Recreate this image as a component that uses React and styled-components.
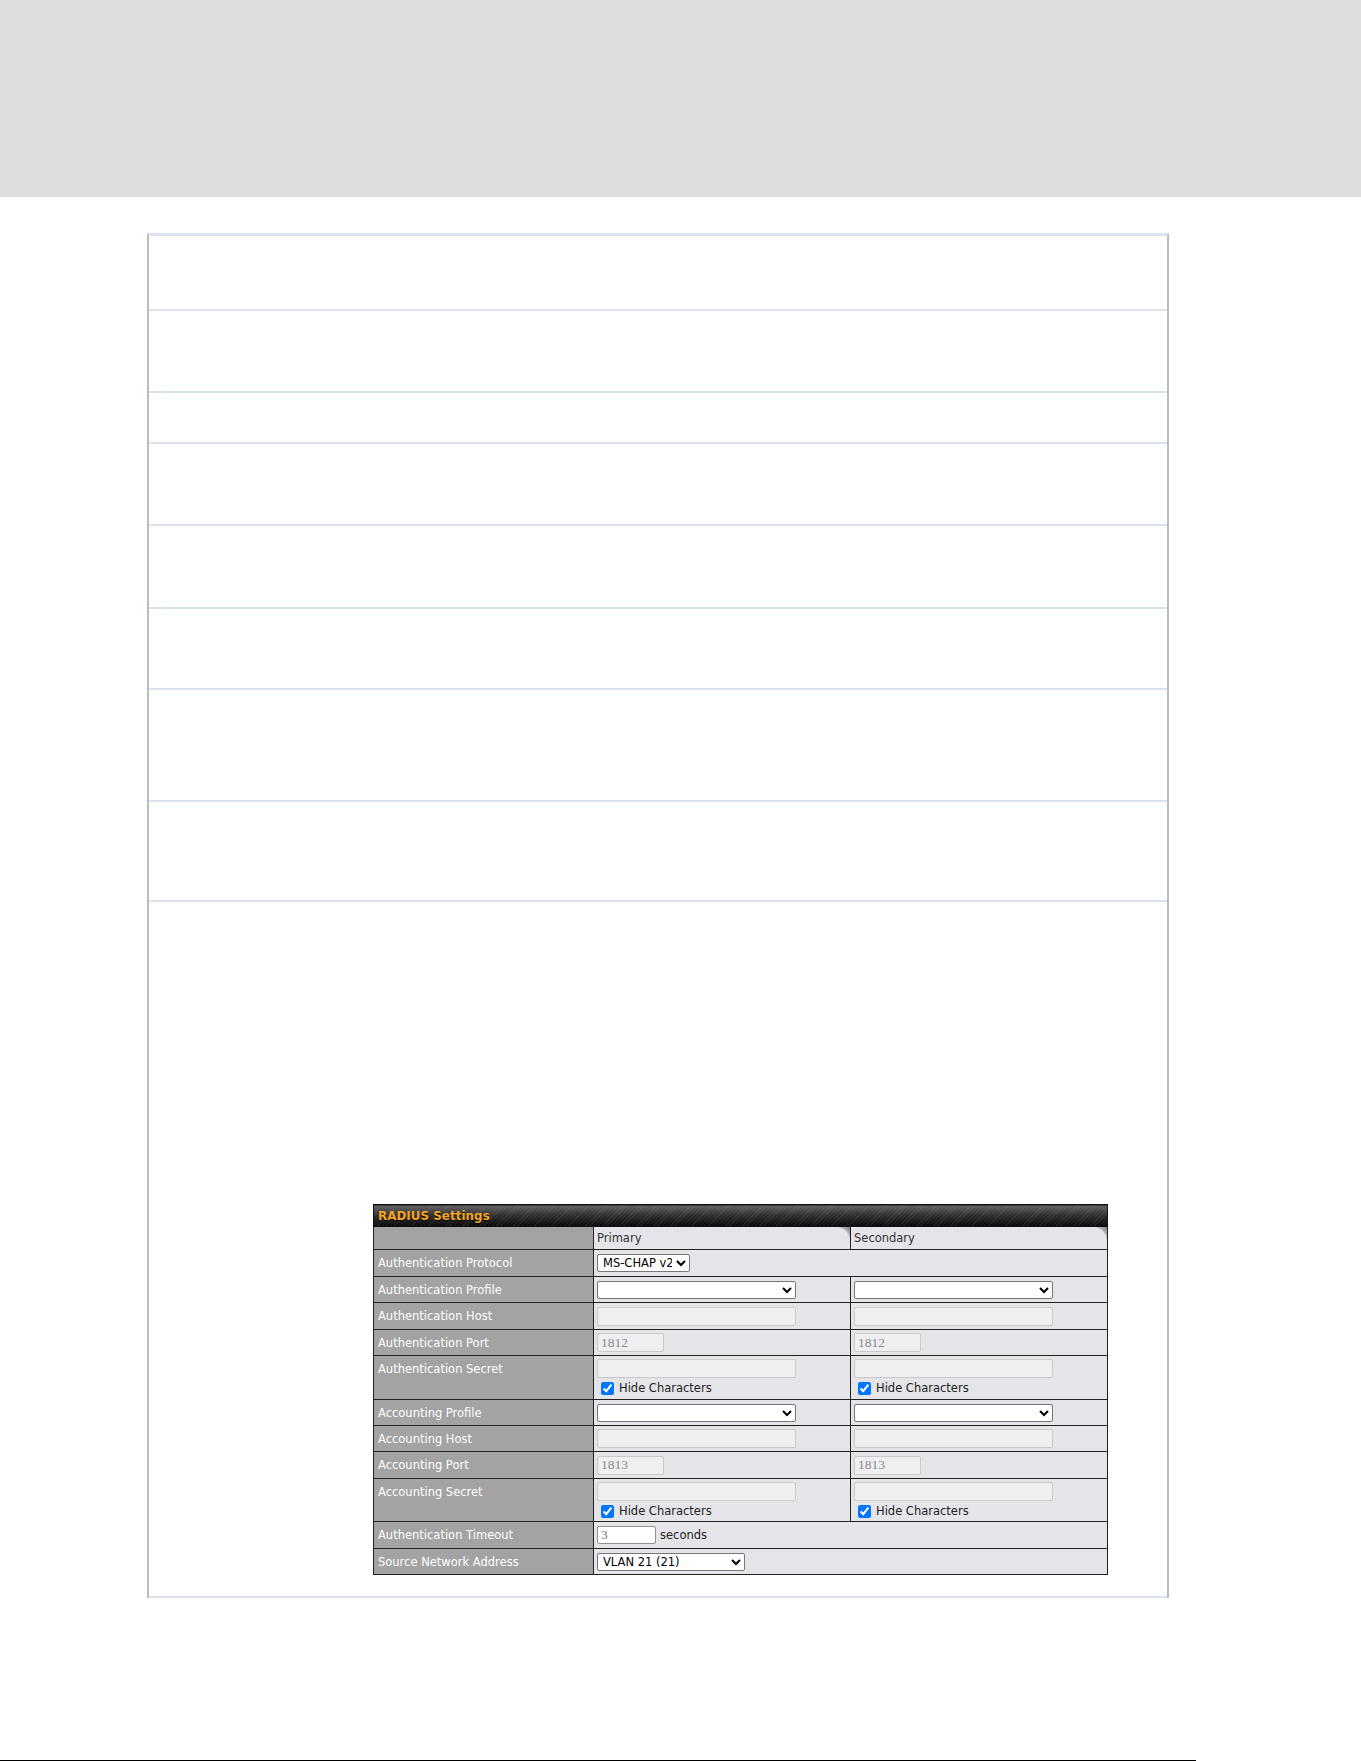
import React from 'react';
import styled, { createGlobalStyle } from 'styled-components';

const GlobalStyle = createGlobalStyle`
  html, body {
    margin: 0;
    padding: 0;
    background: #fff;
  }
  body {
    font-family: "DejaVu Sans", Verdana, sans-serif;
  }
`;

const Page = styled.div`
  width: 1361px;
`;

const Banner = styled.header`
  height: 197px;
  background: #dedede;
`;

const Sheet = styled.section`
  box-sizing: border-box;
  width: 1022px;
  margin: 36px 0 0 147px;
  border-top: 3px solid #dbe3ef;
  border-left: 2px solid #bcbcbc;
  border-right: 2px solid #bcbcbc;
  display: flex;
  flex-direction: column;
`;

const Row = styled.div`
  box-sizing: border-box;
  height: ${p => (p.$h ? `${p.$h}px` : 'auto')};
  border-bottom: 2px solid #dbe3ef;
  background: #fff;
`;

const FigureRow = styled(Row)`
  padding: 302px 0 21px 224px;
`;

const FootRule = styled.div`
  width: 1196px;
  height: 2px;
  margin-top: 162px;
  background: #000;
`;

/* radius settings panel */

const Radius = styled.table`
  width: 735px;
  border-collapse: collapse;
  table-layout: fixed;
  border: 1px solid #111;
  font-size: 11.5px;
  font-family: "DejaVu Sans", Verdana, sans-serif;
`;

const Col = styled.col`
  width: ${p => p.$w}px;
`;

const Tr = styled.tr`
  height: ${p => p.$h}px;
`;

const TitleCell = styled.th`
  padding: 0 4px;
  text-align: left;
  color: #f5a623;
  font-weight: bold;
  font-size: 11.8px;
  letter-spacing: 0.1px;
  text-shadow: 0 1px 0 #000;
  background:
    repeating-linear-gradient(-45deg, rgba(255, 255, 255, 0.09) 0 1px, transparent 1px 3px),
    linear-gradient(#616161, #2e2e2e 45%, #060606);
  border: 1px solid #111;
`;

const TabCell = styled.th`
  padding: 0 3px;
  text-align: left;
  font-weight: normal;
  color: #333;
  background:
    radial-gradient(circle at 0 100%, #e5e5e9 13.5px, #b4b4b4 14.5px, #7a7a7a 20px) top right / 14px 14px no-repeat,
    #e5e5e9;
  border: 1px solid #222;
  border-top-color: #111;
`;

const LabelCell = styled.td`
  background: #a3a3a3;
  color: #fff;
  padding: ${p => (p.$top ? '6px 4px 0' : '0 4px')};
  vertical-align: ${p => (p.$top ? 'top' : 'middle')};
  border: 1px solid #222;
  white-space: nowrap;
  overflow: hidden;
`;

const HeadLabel = styled(LabelCell).attrs({ as: 'th' })``;

const ValueCell = styled.td`
  background: #e5e5e9;
  color: #222;
  padding: ${p => (p.$top ? '3px 3px 0' : '0 3px')};
  vertical-align: ${p => (p.$top ? 'top' : 'middle')};
  border: 1px solid #222;
  white-space: nowrap;
`;

const Picker = styled.select`
  box-sizing: border-box;
  display: block;
  width: ${p => p.$w}px;
  height: 18px;
  margin: 0;
  padding: 0 1px;
  font: 11.5px "DejaVu Sans", Verdana, sans-serif;
  color: #000;
  background: #fff;
  border: 1px solid #767676;
  border-radius: 2px;
`;

const FieldInput = styled.input`
  box-sizing: border-box;
  display: block;
  width: ${p => p.$w}px;
  height: 19px;
  margin: 0;
  padding: 0 3px;
  font: 13.5px "Liberation Serif", serif;
  color: #8a8a8a;
  background: #efeff1;
  border: 1px solid #c9c9cb;
  border-radius: 2px;

  &:disabled {
    color: #8a8a8a;
    background: #efeff1;
    border-color: #c9c9cb;
  }
`;

const Inline = styled.div`
  display: flex;
  align-items: center;
  gap: 4px;
`;

const TimeoutInput = styled.input`
  box-sizing: border-box;
  width: 59px;
  height: 18px;
  margin: 0;
  padding: 0 3px;
  font: 13.5px "Liberation Serif", serif;
  color: #777;
  background: #fff;
  border: 1px solid #8f8f8f;
  border-radius: 2px;
`;

const CheckLine = styled.label`
  display: flex;
  align-items: center;
  height: 20px;
  color: #222;

  input {
    width: 13px;
    height: 13px;
    margin: 0 5px 0 4px;
  }
`;

const ProfileSelect = () => (
  <Picker $w={199} defaultValue="">
    <option value=""></option>
  </Picker>
);

const SecretField = () => (
  <>
    <FieldInput $w={199} type="text" disabled />
    <CheckLine>
      <input type="checkbox" defaultChecked />
      Hide Characters
    </CheckLine>
  </>
);

const RadiusSettings = () => (
  <Radius>
    <colgroup>
      <Col $w={220} />
      <Col $w={257} />
      <Col $w={257} />
    </colgroup>
    <thead>
      <Tr $h={22}>
        <TitleCell colSpan={3}>RADIUS Settings</TitleCell>
      </Tr>
      <Tr $h={23}>
        <HeadLabel />
        <TabCell>Primary</TabCell>
        <TabCell>Secondary</TabCell>
      </Tr>
    </thead>
    <tbody>
      <Tr $h={27}>
        <LabelCell>Authentication Protocol</LabelCell>
        <ValueCell colSpan={2}>
          <Picker $w={93} defaultValue="mschapv2">
            <option value="mschapv2">MS-CHAP v2</option>
          </Picker>
        </ValueCell>
      </Tr>
      <Tr $h={26}>
        <LabelCell>Authentication Profile</LabelCell>
        <ValueCell><ProfileSelect /></ValueCell>
        <ValueCell><ProfileSelect /></ValueCell>
      </Tr>
      <Tr $h={27}>
        <LabelCell>Authentication Host</LabelCell>
        <ValueCell><FieldInput $w={199} disabled /></ValueCell>
        <ValueCell><FieldInput $w={199} disabled /></ValueCell>
      </Tr>
      <Tr $h={26}>
        <LabelCell>Authentication Port</LabelCell>
        <ValueCell><FieldInput $w={67} disabled defaultValue="1812" /></ValueCell>
        <ValueCell><FieldInput $w={67} disabled defaultValue="1812" /></ValueCell>
      </Tr>
      <Tr $h={44}>
        <LabelCell $top>Authentication Secret</LabelCell>
        <ValueCell $top><SecretField /></ValueCell>
        <ValueCell $top><SecretField /></ValueCell>
      </Tr>
      <Tr $h={26}>
        <LabelCell>Accounting Profile</LabelCell>
        <ValueCell><ProfileSelect /></ValueCell>
        <ValueCell><ProfileSelect /></ValueCell>
      </Tr>
      <Tr $h={26}>
        <LabelCell>Accounting Host</LabelCell>
        <ValueCell><FieldInput $w={199} disabled /></ValueCell>
        <ValueCell><FieldInput $w={199} disabled /></ValueCell>
      </Tr>
      <Tr $h={27}>
        <LabelCell>Accounting Port</LabelCell>
        <ValueCell><FieldInput $w={67} disabled defaultValue="1813" /></ValueCell>
        <ValueCell><FieldInput $w={67} disabled defaultValue="1813" /></ValueCell>
      </Tr>
      <Tr $h={43}>
        <LabelCell $top>Accounting Secret</LabelCell>
        <ValueCell $top><SecretField /></ValueCell>
        <ValueCell $top><SecretField /></ValueCell>
      </Tr>
      <Tr $h={27}>
        <LabelCell>Authentication Timeout</LabelCell>
        <ValueCell colSpan={2}>
          <Inline>
            <TimeoutInput type="text" defaultValue="3" />
            seconds
          </Inline>
        </ValueCell>
      </Tr>
      <Tr $h={26}>
        <LabelCell>Source Network Address</LabelCell>
        <ValueCell colSpan={2}>
          <Picker $w={148} defaultValue="vlan21">
            <option value="vlan21">VLAN 21 (21)</option>
          </Picker>
        </ValueCell>
      </Tr>
    </tbody>
  </Radius>
);

const sectionHeights = [75, 82, 51, 82, 83, 81, 112, 100];

export default function App() {
  return (
    <Page>
      <GlobalStyle />
      <Banner />
      <Sheet>
        {sectionHeights.map((h, i) => (
          <Row key={i} $h={h} />
        ))}
        <FigureRow>
          <RadiusSettings />
        </FigureRow>
      </Sheet>
      <FootRule />
    </Page>
  );
}
